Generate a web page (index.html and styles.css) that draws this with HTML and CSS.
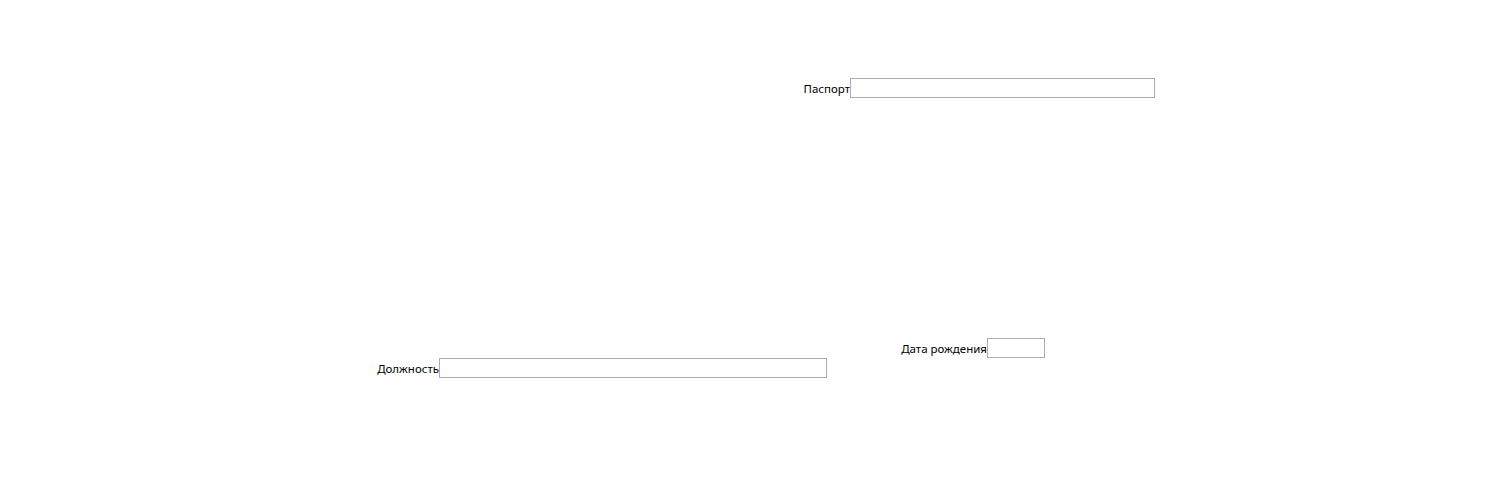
FILE: index.html
```html
<!DOCTYPE html>
<html lang="ru">
<head>
<meta charset="utf-8">
<title>Форма</title>
<link rel="stylesheet" href="styles.css">
</head>
<body>
<div class="form">
  <div class="row row-passport">
    <label class="lbl lbl-passport" for="passport">Паспорт</label>
    <input class="field field-passport" id="passport" type="text">
  </div>
  <div class="row row-birth">
    <label class="lbl lbl-birth" for="birth">Дата рождения</label>
    <input class="field field-birth" id="birth" type="text">
  </div>
  <div class="row row-post">
    <label class="lbl lbl-post" for="post">Должность</label>
    <input class="field field-post" id="post" type="text">
  </div>
</div>
</body>
</html>
```
FILE: styles.css
```css
html, body {
  margin: 0;
  padding: 0;
  background: #ffffff;
}
body {
  font-family: "Noto Sans", "Open Sans", sans-serif;
  font-size: 11.5px;
  color: #000000;
  width: 1495px;
  height: 477px;
  overflow: hidden;
}
.form {
  display: flex;
  flex-direction: column;
  padding-top: 78px;
}
.row {
  display: flex;
  align-items: center;
  height: 20px;
}
.row-birth {
  margin-top: 240px;
}
.lbl {
  box-sizing: border-box;
  text-align: right;
  white-space: nowrap;
  line-height: 20px;
  padding-top: 2px;
  flex: none;
}
.lbl-passport { width: 850px; }
.lbl-birth { width: 987px; }
.lbl-post { width: 439px; }
.field {
  box-sizing: border-box;
  height: 20px;
  margin: 0;
  padding: 0 2px;
  border: 1px solid #abadb3;
  background: #ffffff;
  font: inherit;
  outline: none;
  flex: none;
}
.field-passport { width: 305px; }
.field-birth { width: 58px; }
.field-post { width: 388px; }
```
